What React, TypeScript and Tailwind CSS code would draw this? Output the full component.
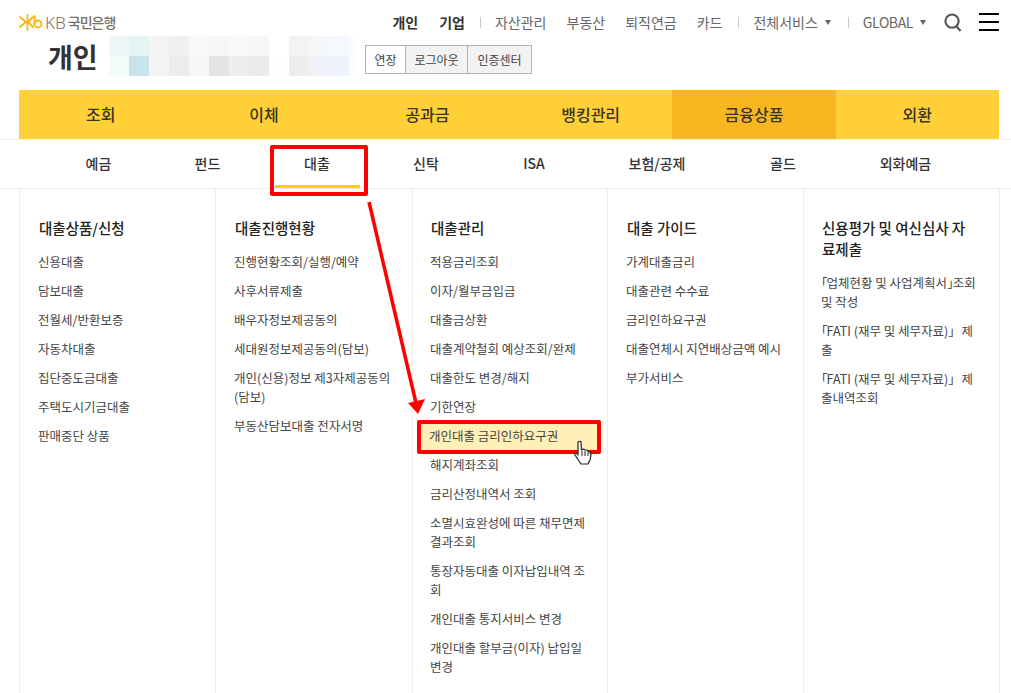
const F = { fontFamily: '"Noto Sans CJK KR","Noto Sans",sans-serif' };

const L = ({ c }: { c: string }) => <span className="-ml-[6px] -mr-[1px]">{c}</span>;
const R = ({ c }: { c: string }) => <span className="tracking-[-7px]">{c}</span>;

const HL = '개인대출 금리인하요구권';

const columns: any[] = [
  { w: 'w-[196px]', pl: 'pl-[18px]', mb: 'mb-[9px]', title: ['대출상품/신청'], items: ['신용대출', '담보대출', '전월세/반환보증', '자동차대출', '집단중도금대출', '주택도시기금대출', '판매중단 상품'] },
  { w: 'w-[197px]', pl: 'pl-[18px]', mb: 'mb-[9px]', title: ['대출진행현황'], items: ['진행현황조회/실행/예약', '사후서류제출', '배우자정보제공동의', '세대원정보제공동의(담보)', ['개인(신용)정보 제3자제공동의', '(담보)'], '부동산담보대출 전자서명'] },
  { w: 'w-[195px]', pl: 'pl-[17px]', mb: 'mb-[9px]', title: ['대출관리'], items: ['적용금리조회', '이자/월부금입금', '대출금상환', '대출계약철회 예상조회/완제', '대출한도 변경/해지', '기한연장', HL, '해지계좌조회', '금리산정내역서 조회', ['소멸시효완성에 따른 채무면제', '결과조회'], ['통장자동대출 이자납입내역 조', '회'], '개인대출 통지서비스 변경', ['개인대출 할부금(이자) 납입일', '변경']] },
  { w: 'w-[196px]', pl: 'pl-[18px]', mb: 'mb-[9px]', title: ['대출 가이드'], items: ['가계대출금리', '대출관련 수수료', '금리인하요구권', '대출연체시 지연배상금액 예시', '부가서비스'] },
  { w: 'w-[196px]', pl: 'pl-[17px]', mb: 'mb-[9px]', title: ['신용평가 및 여신심사 자', '료제출'], items: [
    [<><L c="「" />업체현황 및 사업계획서<R c="」" />조회</>, '및 작성'],
    [<><L c="「" />FATI (재무 및 세무자료)<R c="」" /> <span className="ml-[5px]">제</span></>, '출'],
    [<><L c="「" />FATI (재무 및 세무자료)<R c="」" /> <span className="ml-[5px]">제</span></>, '출내역조회'],
  ] },
];

const blur = [
  ['#ecf8f8', '#e2f5f4', '#f4f4f4', '#f0f0f0', '#f9f9f9', '#f6f6f6', '#f9f9f9', '#f6f6f6', '#ffffff', '#f3f3f3', '#f5f6f9', '#f5f8fe'],
  ['#f4fbfb', '#c8e3ec', '#f4f4f4', '#ececec', '#f6f7f9', '#e4e4e4', '#eeeeee', '#ebebeb', '#fdfdfd', '#eeeeee', '#eff1f8', '#eef2fc'],
];

export default function App() {
  return (
    <div className="w-[1011px] h-[693px] overflow-hidden relative bg-white text-[#333]" style={F}>
      <header className="h-[90px] relative">
        <div className="flex items-center pl-[19px] pt-[10px] h-[34px]">
          <svg width="24" height="17" viewBox="0 0 24 17" fill="none" stroke="#fbb614" strokeWidth="1.800" strokeLinecap="round">
            <path d="M1 3l6 5M1 13l6-5M8.500 1v15M9 8l5-5M9 8l5 5" />
            <path d="M15.500 2v8" />
            <circle cx="19" cy="10" r="3.500" />
          </svg>
          <span className="ml-[2px] text-[17px] leading-none text-[#7a7166] font-light" style={{ fontFamily: '"Noto Sans",sans-serif' }}>KB</span>
          <span className="ml-[2px] text-[14px] leading-none font-medium text-[#7a7166] tracking-[-1px]">국민은행</span>
          <nav className="ml-auto mr-[12px] flex items-center text-[14px] text-[#666] leading-none">
            <b className="font-bold text-[#333]">개인</b>
            <b className="font-bold text-[#333] ml-[21px]">기업</b>
            <i className="w-px h-[11px] bg-[#ccc] ml-[15px]" />
            <span className="ml-[14px]">자산관리</span>
            <span className="ml-[20px]">부동산</span>
            <span className="ml-[20px]">퇴직연금</span>
            <span className="ml-[20px]">카드</span>
            <i className="w-px h-[11px] bg-[#ccc] ml-[16px]" />
            <span className="ml-[14px]">전체서비스</span>
            <i className="ml-[7px] w-0 h-0 border-x-[3.5px] border-x-transparent border-t-[5px] border-t-[#666]" />
            <i className="w-px h-[11px] bg-[#ccc] ml-[17px]" />
            <span className="ml-[14px] tracking-[-0.4px]">GLOBAL</span>
            <i className="ml-[7px] w-0 h-0 border-x-[3.5px] border-x-transparent border-t-[5px] border-t-[#666]" />
            <svg className="ml-[18px]" width="18" height="19" viewBox="0 0 19 20" fill="none" stroke="#555" strokeWidth="2.2"><circle cx="8.5" cy="8.5" r="7" /><path d="M13 14l4.5 5" /></svg>
            <span className="ml-[17px] flex flex-col gap-[6px]"><i className="block w-5 h-[2px] bg-black" /><i className="block w-5 h-[2px] bg-black" /><i className="block w-5 h-[2px] bg-black" /></span>
          </nav>
        </div>
        <div className="flex items-center h-[44px]">
          <h1 className="ml-[48px] w-[61px] text-[27px] leading-none font-bold text-[#333]">개인</h1>
          <div className="flex flex-col">
            {blur.map((row, r) => (
              <div key={r} className="flex">
                {row.map((c, i) => <i key={i} className="block w-[20px] h-[20px]" style={{ background: c }} />)}
                <i className="block w-[7px] h-[20px] bg-[#fafcff]" />
              </div>
            ))}
          </div>
          <div className="ml-[9px] self-start mt-[11px] flex h-[29px] border border-[#b3b3b3] text-[12px] text-[#444] leading-[27px]">
            <span className="w-[39px] text-center bg-white">연장</span>
            <span className="w-[62px] text-center bg-[#f2f2f2] border-l border-[#b3b3b3]">로그아웃</span>
            <span className="w-[64px] text-center bg-[#f2f2f2] border-l border-[#b3b3b3]">인증센터</span>
          </div>
        </div>
      </header>

      <div className="border-b border-[#efefef]">
        <nav className="ml-[19px] w-[980px] h-[49px] bg-[#ffd038] grid grid-cols-6 text-[16px] font-medium text-[#3b3420] text-center leading-[49px]">
          <span>조회</span><span>이체</span><span>공과금</span><span>뱅킹관리</span><span className="bg-[#f9b71f]">금융상품</span><span>외환</span>
        </nav>
      </div>

      <div className="border-b border-[#efefef] h-[49px]">
        <nav className="ml-[19px] h-[48px] flex text-[14px] font-medium text-[#333] text-center leading-[46px]">
          <span className="w-[159px]">예금</span>
          <span className="w-[59px]">펀드</span>
          <span className="w-[160px]">대출</span>
          <span className="w-[58px]">신탁</span>
          <span className="w-[158px]">ISA</span>
          <span className="w-[88px]">보험/공제</span>
          <span className="w-[164px]">골드</span>
          <span className="w-[81px]">외화예금</span>
        </nav>
      </div>

      <main className="mx-[19px] flex h-[505px] border-l border-[#efefef]">
        {columns.map((c, i) => (
          <section key={i} className={`${c.w} ${c.pl} shrink-0 border-r border-[#efefef] pr-[12px] pt-[28px]`}>
            <h2 className={`${c.mb} ml-[1px] text-[14.5px] leading-[21px] font-medium text-[#222]`}>
              {c.title.map((t: string) => <div key={t}>{t}</div>)}
            </h2>
            <ul className="text-[12.5px] leading-[19px] text-[#444]">
              {c.items.map((it: any, j: number) => {
                const lines = Array.isArray(it) ? it : [it];
                const active = it === HL;
                return (
                  <li key={j} className="py-[5px] relative">
                    {active && <i className="absolute -left-[13px] -top-[1px] w-[184px] h-[34px] border-[4px] border-[#f00] rounded-[2px] bg-[#fff0b8]" />}
                    {lines.map((l: any, k: number) => <div key={k} className={active ? 'relative -ml-px whitespace-nowrap' : 'whitespace-nowrap'}>{l}</div>)}
                  </li>
                );
              })}
            </ul>
          </section>
        ))}
      </main>

      <div className="absolute left-[270px] top-[145px] w-[98px] h-[51px] border-[4px] border-[#f00] rounded-[2px]" />
      <i className="absolute left-[275px] top-[185px] w-[85px] h-[3px] bg-[#ffd000]" />

      <svg className="absolute left-[360px] top-[195px]" width="70" height="225" viewBox="0 0 70 225" fill="none">
        <path d="M9 7L56 208" stroke="#f00" strokeWidth="3.500" />
        <path d="M48 208L65 204 58 219z" fill="#f00" />
      </svg>

      <svg className="absolute left-[573px] top-[440px]" width="20" height="26" viewBox="0 0 20 26">
        <path d="M5 2c1-1 2.500-1 3 0l0.500 8 2-1 1.500 1 2 0 1.500 1.500 1.500 0.500 1 3-1 5-2 4H8L2 15 1.500 13l2 0 1.500 2z" fill="#fff" stroke="#222" strokeWidth="1.200" strokeLinejoin="round" />
        <path d="M9 11v5M12 11v5M15 12v4" stroke="#222" strokeWidth="1" />
      </svg>
    </div>
  );
}
